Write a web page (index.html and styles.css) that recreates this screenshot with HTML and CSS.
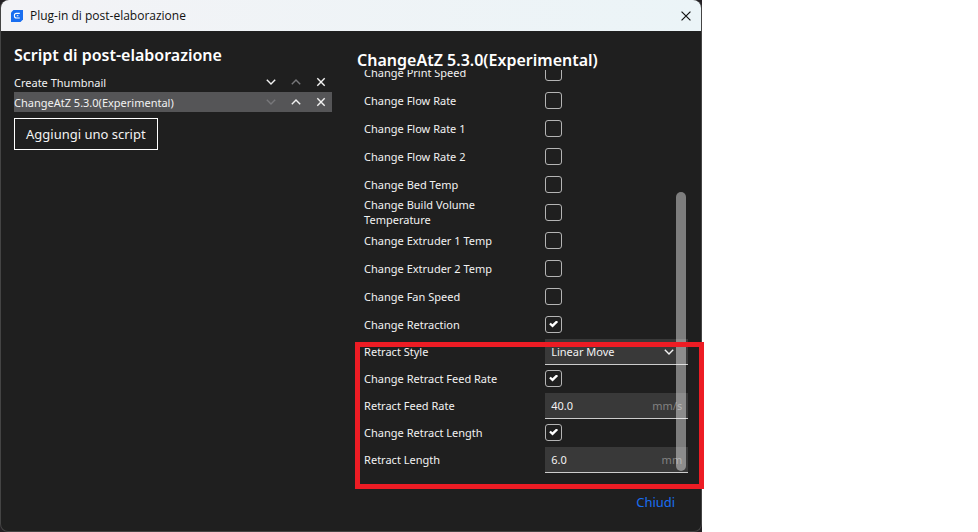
FILE: index.html
```html
<!DOCTYPE html>
<html lang="it">
<head>
<meta charset="utf-8">
<title>Plug-in di post-elaborazione</title>
<link rel="stylesheet" href="styles.css">
</head>
<body>
<svg class="symbols" aria-hidden="true">
  <symbol id="down" viewBox="0 0 10 10"><path d="M.8 2.8 5 7 9.200 2.800"/></symbol>
  <symbol id="up" viewBox="0 0 10 10"><path d="M.8 7.200 5 3 9.200 7.200"/></symbol>
  <symbol id="cross" viewBox="0 0 10 10"><path d="m1.300 1.300 7.400 7.400m0-7.400L1.300 8.700"/></symbol>
</svg>
<div class="frame">
  <main class="dialog">
    <header class="titlebar">
      <svg class="logo" viewBox="0 0 12 12" aria-hidden="true"><path class="logo-bg" d="M2.500 0H12v9.500L9.500 12H0V2.500z"/><path class="logo-c" d="M8.800 3.400H5.400Q3.400 3.400 3.400 5.400v.6q0 2 2 2h3.400M5.800 5.700h1.600"/></svg>
      <h1>Plug-in di post-elaborazione</h1>
      <button class="icon close" aria-label="Chiudi finestra"><svg><use href="#cross"/></svg></button>
    </header>
    <div class="content">
      <section class="scripts">
        <h2>Script di post-elaborazione</h2>
        <ul>
          <li><span>Create Thumbnail</span>
            <button class="icon" aria-label="Sposta giù"><svg><use href="#down"/></svg></button>
            <button class="icon" aria-label="Sposta su" disabled><svg><use href="#up"/></svg></button>
            <button class="icon" aria-label="Rimuovi"><svg><use href="#cross"/></svg></button></li>
          <li class="selected"><span>ChangeAtZ 5.3.0(Experimental)</span>
            <button class="icon" aria-label="Sposta giù" disabled><svg><use href="#down"/></svg></button>
            <button class="icon" aria-label="Sposta su"><svg><use href="#up"/></svg></button>
            <button class="icon" aria-label="Rimuovi"><svg><use href="#cross"/></svg></button></li>
        </ul>
        <button class="add">Aggiungi uno script</button>
      </section>
      <section class="settings">
        <h2>ChangeAtZ 5.3.0(Experimental)</h2>
        <div class="list">
          <div class="row"><label for="s1">Change Print Speed</label><input type="checkbox" id="s1"></div>
          <div class="row"><label for="s2">Change Flow Rate</label><input type="checkbox" id="s2"></div>
          <div class="row"><label for="s3">Change Flow Rate 1</label><input type="checkbox" id="s3"></div>
          <div class="row"><label for="s4">Change Flow Rate 2</label><input type="checkbox" id="s4"></div>
          <div class="row"><label for="s5">Change Bed Temp</label><input type="checkbox" id="s5"></div>
          <div class="row"><label for="s6">Change Build Volume Temperature</label><input type="checkbox" id="s6"></div>
          <div class="row"><label for="s7">Change Extruder 1 Temp</label><input type="checkbox" id="s7"></div>
          <div class="row"><label for="s8">Change Extruder 2 Temp</label><input type="checkbox" id="s8"></div>
          <div class="row"><label for="s9">Change Fan Speed</label><input type="checkbox" id="s9"></div>
          <div class="row"><label for="s10">Change Retraction</label><input type="checkbox" id="s10" checked></div>
          <div class="row sub"><label for="s11">Retract Style</label><div class="field"><select id="s11"><option>Linear Move</option></select><svg><use href="#down"/></svg></div></div>
          <div class="row sub"><label for="s12">Change Retract Feed Rate</label><input type="checkbox" id="s12" checked></div>
          <div class="row sub"><label for="s13">Retract Feed Rate</label><div class="field"><input type="text" id="s13" value="40.0"><span>mm/s</span></div></div>
          <div class="row sub"><label for="s14">Change Retract Length</label><input type="checkbox" id="s14" checked></div>
          <div class="row sub"><label for="s15">Retract Length</label><div class="field"><input type="text" id="s15" value="6.0"><span>mm</span></div></div>
          <div class="thumb"></div>
        </div>
        <div class="highlight"></div>
      </section>
    </div>
    <footer><button class="dismiss">Chiudi</button></footer>
  </main>
</div>
</body>
</html>
```
FILE: styles.css
```css
* { box-sizing: border-box; }
body {
  margin: 0;
  background: #fff;
  color: #f2f2f2;
  font: 11px/15px "Noto Sans", sans-serif;
}
button, input, select { font: inherit; color: inherit; margin: 0; padding: 0; border: 0; background: none; }
svg { width: 10px; height: 10px; fill: none; stroke: currentColor; stroke-width: 1.4; }
.symbols { position: absolute; width: 0; height: 0; }
.frame { width: 71.8%; background: #242024; }
.dialog {
  min-height: 100vh;
  display: flex;
  flex-direction: column;
  border: 1px solid #444;
  border-top-width: 0;
  border-radius: 8px;
  background: #1f1f1f;
}
.titlebar {
  display: flex;
  align-items: center;
  height: 31px;
  padding: 0 9px 0 10px;
  border-radius: 8px 8px 0 0;
  background: linear-gradient(90deg, #f3f3f6, #ebf4f7);
  color: #111;
}
.logo { width: 12px; height: 12px; margin-right: 7px; }
.logo-bg { fill: #196ef0; stroke: none; }
.logo-c { stroke: #fff; stroke-width: 1.1; }
h1 { flex: 1; margin: 0; font: 12px/16px "Open Sans", sans-serif; }
.icon { display: grid; place-items: center; width: 12px; height: 16px; }
.icon:disabled { color: #77777a; }
.close svg { stroke-width: 1; width: 12px; height: 12px; }
.content { flex: 1; display: grid; grid-template-columns: 318fr 331fr; gap: 25px; padding: 0 13px; }
h2 { margin: 0; font-size: 16px; line-height: 22px; font-weight: 600; color: #fff; white-space: nowrap; }
.scripts { padding-top: 13px; }
ul { list-style: none; margin: 6px 0; padding: 0; }
li { display: flex; align-items: center; gap: 13px; height: 20px; padding-right: 5px; }
li span { flex: 1; }
.selected { background: #555557; }
.add { height: 32px; padding: 0 11px; border: 1px solid #fff; font-size: 13px; }
.settings { position: relative; display: flex; flex-direction: column; padding-top: 18px; }
.list {
  position: relative;
  display: flex;
  flex-direction: column;
  justify-content: flex-end;
  height: 404px;
  margin-top: -1px;
  padding-left: 7px;
  overflow: hidden;
}
.row {
  flex: none;
  display: grid;
  grid-template: 100% / minmax(0, 181fr) minmax(0, 143fr);
  align-items: center;
  height: 28px;
}
.row.sub { height: 27px; padding-bottom: 1px; }
.row label { max-width: 140px; margin-bottom: 2px; }
input[type="checkbox"] {
  appearance: none;
  width: 17px;
  height: 17px;
  margin-bottom: 2px;
  border: 1px solid #b4b4b4;
  border-radius: 3px;
}
input[type="checkbox"]:checked::before {
  content: "";
  display: block;
  width: 9px;
  height: 7px;
  margin: 4px 0 0 3px;
  background: #fff;
  clip-path: polygon(0 55%, 18% 32%, 36% 52%, 80% 0, 100% 20%, 38% 100%);
}
.field { display: flex; align-items: center; height: 26px; padding: 0 6px; background: #393939; border-bottom: 1px solid #ccc; }
.field input, .field select { flex: 1; min-width: 0; appearance: none; }
.field span { color: #828282; }
.field svg { margin-right: 8px; }
.thumb {
  position: absolute;
  right: 2px;
  bottom: 3px;
  width: 10px;
  height: 279px;
  border-radius: 5px;
  background: rgba(255, 255, 255, .42);
}
.highlight { position: absolute; top: 311px; left: -2px; right: -16px; height: 147px; border: 5px solid #ed1c24; pointer-events: none; }
footer { display: flex; justify-content: flex-end; padding: 0 26px 19px; }
.dismiss { color: #196ef0; font-size: 13px; line-height: 20px; }
```
